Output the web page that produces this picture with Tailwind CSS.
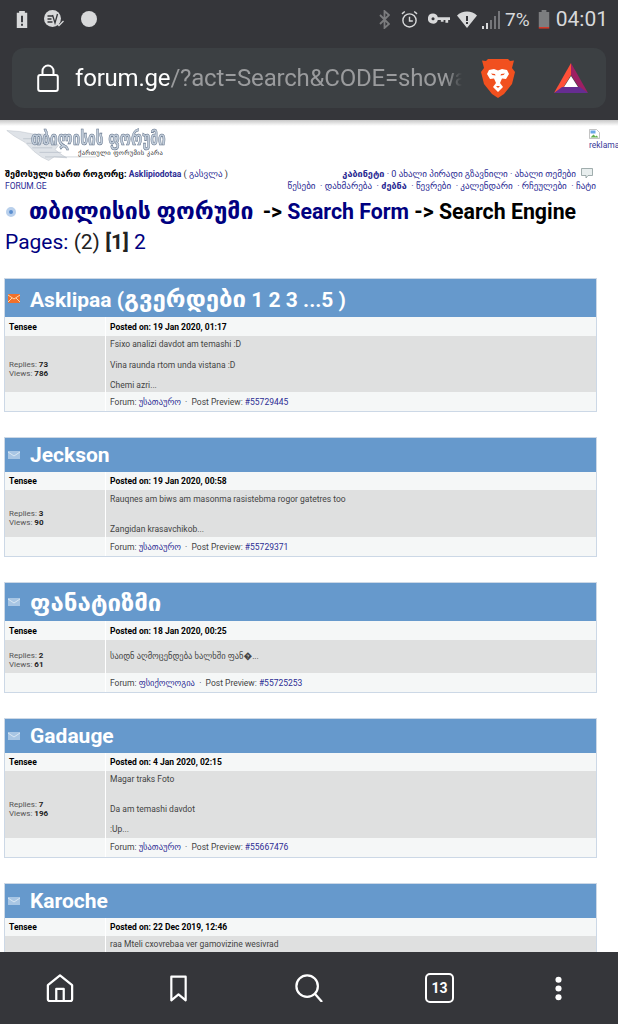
<!DOCTYPE html>
<html lang="ka">
<head>
  <meta charset="UTF-8">
  <meta name="viewport" content="width=device-width, initial-scale=1.0">
  <title>forum.ge</title>
  <script src="https://cdn.jsdelivr.net/npm/@tailwindcss/browser@4"></script>
</head>
<body class="relative w-[618px] h-[1024px] overflow-hidden bg-white font-['Roboto','DejaVu_Sans',sans-serif]">

  <!-- status bar -->
  <div class="h-[38px] bg-[#35363a] flex items-center pl-[16px] pr-[10px] text-[#d8d9da]">
    <svg class="w-[12px] h-[19px] mr-[15px]" viewBox="0 0 12 20"><path fill="#d8d9da" d="M3 1h6v2h2.500v16H.5V3H3z"/><path fill="#35363a" d="M5 6h2v7H5zM5 14.500h2v2H5z"/></svg>
    <svg class="w-[23px] h-[20px] mr-[15px]" viewBox="0 0 22 20"><circle cx="9" cy="9.500" r="8.500" fill="#d8d9da"/><path fill="none" stroke="#35363a" stroke-width="1.300" d="M4 7h5M4 10h4M4 13h5M9 6l2.500 8L14 5"/><path fill="none" stroke="#d8d9da" stroke-width="1.300" d="M13 14l2.500 2.500L20 12"/></svg>
    <div class="w-[16px] h-[16px] rounded-full bg-[#d8d9da]"></div>
    <div class="flex-1"></div>
    <svg class="w-[11px] h-[19px] mr-[11px]" viewBox="0 0 11 19"><path fill="none" stroke="#7b7c7e" stroke-width="1.800" d="M1 5l9 9-4.500 4V1L10 5l-9 9"/></svg>
    <svg class="w-[17px] h-[19px] mr-[10px]" viewBox="0 0 18 20"><circle cx="9" cy="11" r="7" fill="none" stroke="#d8d9da" stroke-width="1.500"/><path fill="none" stroke="#d8d9da" stroke-width="1.500" d="M9 7v4.500h3.500M1 4l3-2.500M17 4l-3-2.500"/></svg>
    <svg class="w-[22px] h-[12px] mr-[7px]" viewBox="0 0 24 12"><path fill="#d8d9da" fill-rule="evenodd" d="M5.500 0a5.500 5.500 0 0 1 5.200 4H24v3h-2v3h-3V7h-2v2h-3V7h-3.300A5.500 5.500 0 1 1 5.500 0zm0 4a1.700 1.700 0 1 0 0 3.400 1.700 1.700 0 0 0 0-3.400z"/></svg>
    <svg class="w-[20px] h-[17px] mr-[5px]" viewBox="0 0 20 17"><path fill="#d8d9da" d="M0 4.500C5-1 15-1 20 4.500L10 17z"/><path fill="#35363a" d="M9 5h2v5H9zM9 11h2v2H9z"/></svg>
    <svg class="w-[18px] h-[19px] mr-[5px]" viewBox="0 0 18 19"><path fill="#d8d9da" d="M0 16h2v3H0zM4 13h2v6H4z"/><path fill="#75767a" d="M8 10h2v9H8zM12 6h2v13h-2zM16 1h2v18h-2z"/></svg>
    <span class="text-[19px] leading-none mr-[8px]">7%</span>
    <svg class="w-[12px] h-[19px] mr-[6px]" viewBox="0 0 11 20"><path fill="#7c7d7f" d="M3 0h5v2h3v16H0V2h3z"/><path fill="#e53a28" d="M0 18h11v1.500H0z"/></svg>
    <span class="text-[21px] leading-none">04:01</span>
  </div>

  <!-- toolbar -->
  <div class="h-[82px] bg-[#35363a] px-3 pt-[10px] relative">
    <div class="h-[60px] bg-[#3c4043] rounded-xl flex items-center">
      <svg class="w-[22px] h-[28px] ml-[25px] mr-[16px]" viewBox="0 0 22 28"><rect x="1.200" y="11" width="19.600" height="16" rx="2" fill="none" stroke="#fff" stroke-width="2"/><path fill="none" stroke="#fff" stroke-width="2" d="M5.500 11V7a5.500 5.500 0 0 1 11 0v4"/></svg>
      <div class="w-[387px] overflow-hidden whitespace-nowrap text-[24px] tracking-[-0.2px] text-[#9a9b9d] [mask-image:linear-gradient(to_right,black_96%,transparent)]"><span class="text-white">forum.ge</span>/?act=Search&amp;CODE=showall</div>
      <svg class="w-[34px] h-[40px] ml-[19px]" viewBox="0 0 34 40"><path fill="#f1501f" d="M7 1h20l2 2 4-.5L31 10l3 4-3 12-8 10-6 4-6-4-8-10-3-12 3-4-2-7.500L5 3z"/><path fill="#fff" d="M8 12l5-1 4 1.500L21 11l5 1 2 4-3 5-4-.5-2 4.500 3 4-5 5-5-5 3-4-2-4.500-4 .5-3-5z"/><path fill="#f1501f" d="M10 15.500l4 .5.500 1.500-3-.5zM24 15.500l-4 .5-.5 1.500 3-.5zM15 28h4l-2 2z"/></svg>
      <svg class="w-[34px] h-[30px] ml-[39px]" viewBox="0 0 34 30"><path fill="#ff5038" d="M17 0L0 30l9-5 8-13z"/><path fill="#9e1f63" d="M17 0l17 30-8-4-9-14z"/><path fill="#662d91" d="M0 30h34l-8-6H8z"/><path fill="#fff" d="M17 13l7 11H10z"/></svg>
    </div>
  </div>
  <div class="h-[6px] -mb-[6px] relative bg-gradient-to-b from-[#c8c8c8] to-white"></div>

  <!-- page header -->
  <div class="flex justify-between pl-[5px] h-[46px]">
    <div class="relative w-[170px] h-[46px]">
      <svg class="absolute left-0 top-[6px] w-[100px] h-[40px]" viewBox="0 0 110 40"><path fill="#dfe3e8" stroke="#b5bcc6" stroke-width=".5" d="M2 3l14 1 16 3 12 0 10 8 5 4-4 5 8 6 5 3-14-1-6 4-8-4-8-6-10-10-12-7z"/><path fill="none" stroke="#a9b1bd" stroke-width=".6" d="M20 12h30M24 17h28M30 22h22M38 27h24M44 32h56"/></svg>
      <div class="absolute left-[26px] top-[6px] text-[19px] leading-[24px] font-bold whitespace-nowrap text-[#c3cedb] [-webkit-text-stroke:0.6px_#5d6e85] font-['DejaVu_Sans',sans-serif] scale-x-[.72] origin-left">თბილისის ფორუმი</div>
      <div class="absolute left-[73px] top-[29px] text-[6.500px] whitespace-nowrap tracking-[.3px] text-[#333] font-['DejaVu_Sans',sans-serif]">ქართული ფორუმის კარა</div>
    </div>
    <div class="w-[29px] pt-[9px] text-[8.500px] leading-[10px] text-[#3a3a9a] overflow-hidden">
      <svg class="w-[11px] h-[10px] mb-[1px]" viewBox="0 0 11 10"><path fill="#fff" stroke="#aaa" stroke-width=".7" d="M.5.500h7l3 3v6H.5z"/><path fill="#6aa7e8" d="M1.500 1.500h5v3h-5z"/><path fill="#63b04f" d="M1.500 8.500l3-3 2 2 1-1 2 2z"/></svg>
      <div>reklama</div>
    </div>
  </div>

  <!-- user links -->
  <div class="flex justify-between pl-[5px] pr-[42px] h-[11px] text-[9.100px] leading-[11px] text-[#333] mt-[3px]">
    <div class="whitespace-nowrap"><b class="text-black">შემოსული ხართ როგორც:</b> <b class="text-[#2c2c94] text-[8.500px]">Asklipiodotaa</b> ( <span class="text-[#2c2c94]">გასვლა</span> )</div>
    <div class="whitespace-nowrap text-[#2c2c94]"><b>კაბინეტი</b> · 0 ახალი პირადი გზავნილი · ახალი თემები</div>
  </div>
  <svg class="absolute left-[581px] top-[168px] w-[12px] h-[11px]" viewBox="0 0 12 11"><path fill="#e8eeee" stroke="#8a9a9a" stroke-width=".8" d="M.5.500h11v7H7L5 10V7.500H.5z"/></svg>
  <div class="flex justify-between pl-[5px] pr-[22px] h-[13px] text-[9.100px] leading-[13px] text-[#2c2c94]">
    <div class="text-[8.500px]">FORUM.GE</div>
    <div class="whitespace-nowrap">წესები &nbsp;· დახმარება &nbsp;· <b>ძებნა</b> &nbsp;· წევრები &nbsp;· კალენდარი &nbsp;· რჩეულები &nbsp;· ჩატი</div>
  </div>

  <!-- title -->
  <div class="flex items-center pl-[6px] h-[30px] mt-[4px] text-[21.300px] font-bold text-black whitespace-nowrap">
    <span class="w-[10px] h-[10px] rounded-full bg-[#5b8fd0] border-[3px] border-[#b9d0ec] mr-[13px]"></span>
    <span class="text-[#000080] text-[23px] mr-[4px]">თბილისის ფორუმი</span>&nbsp;-&gt;&nbsp;<span class="text-[#000080]">Search Form</span>&nbsp;-&gt; Search Engine
  </div>
  <div class="pl-[5px] h-[30px] text-[21px] leading-[30px] text-[#222]"><span class="text-[#000080]">Pages:</span> (2) <b>[1]</b> <span class="text-[#000080]">2</span></div>

  <!-- results -->
  <div class="pl-1 w-[597px] mt-[21px] flex flex-col gap-[25px]">

    <div class="border border-[#ccd8e6]">
      <div class="h-[38px] bg-[#6699cc] flex items-center pl-[3px] text-white text-[21px] font-bold">
        <svg class="w-[12px] h-[9px] mr-[10px]" viewBox="0 0 12 9"><rect width="12" height="9" rx="1" fill="#f2702a"/><path fill="none" stroke="#fdd9a8" d="M0 1l6 4 6-4M0 8l4-4M12 8L8 4"/></svg>
        <span class="pt-[2px]">Asklipaa (<span class="text-[24px]">გვერდები</span> 1 2 3 ...5 )</span>
      </div>
      <div class="grid grid-cols-[100px_1fr] gap-x-px text-[8.500px] bg-white">
        <div class="h-[19px] leading-[20px] pl-[4px] bg-[#f5f7f7] font-bold text-black">Tensee</div>
        <div class="h-[19px] leading-[20px] pl-[4px] bg-[#f5f7f7] font-bold text-black">Posted on: 19 Jan 2020, 01:17</div>
        <div class="h-[56px] bg-[#dfe0e0] pl-[4px] pt-[9px] flex flex-col justify-center leading-[9px] text-[8px] text-[#555]"><div>Replies: <b class="text-[#222]">73</b></div><div>Views: <b class="text-[#222]">786</b></div></div>
        <div class="h-[56px] bg-[#dfe0e0] pl-[4px] pt-[3px] leading-[10.300px] text-[#444]">Fsixo analizi davdot am temashi :D<br><br>Vina raunda rtom unda vistana :D<br><br>Chemi azri...</div>
        <div class="h-[19px] bg-[#f5f7f7]"></div>
        <div class="h-[19px] leading-[20px] pl-[4px] bg-[#f5f7f7] text-[#444]">Forum: <span class="text-[#2c2c94]">უსათაურო</span> &nbsp;·&nbsp; Post Preview: <span class="text-[#2c2c94]">#55729445</span></div>
      </div>
    </div>

    <div class="border border-[#ccd8e6]">
      <div class="h-[34px] bg-[#6699cc] flex items-center pl-[3px] text-white text-[21px] font-bold">
        <svg class="w-[12px] h-[8px] mr-[10px]" viewBox="0 0 12 8"><rect width="12" height="8" fill="#a8c6e4"/><path fill="none" stroke="#d8e6f2" d="M0 1l6 4 6-4"/></svg>
        <span class="pt-[1px]">Jeckson</span>
      </div>
      <div class="grid grid-cols-[100px_1fr] gap-x-px text-[8.500px] bg-white">
        <div class="h-[18px] leading-[19px] pl-[4px] bg-[#f5f7f7] font-bold text-black">Tensee</div>
        <div class="h-[18px] leading-[19px] pl-[4px] bg-[#f5f7f7] font-bold text-black">Posted on: 19 Jan 2020, 00:58</div>
        <div class="h-[47px] bg-[#dfe0e0] pl-[4px] pt-[9px] flex flex-col justify-center leading-[9px] text-[8px] text-[#555]"><div>Replies: <b class="text-[#222]">3</b></div><div>Views: <b class="text-[#222]">90</b></div></div>
        <div class="h-[47px] bg-[#dfe0e0] pl-[4px] pt-[4px] leading-[10px] text-[#444]">Rauqnes am biws am masonma rasistebma rogor gatetres too<br><br><br>Zangidan krasavchikob...</div>
        <div class="h-[19px] bg-[#f5f7f7]"></div>
        <div class="h-[19px] leading-[21px] pl-[4px] bg-[#f5f7f7] text-[#444]">Forum: <span class="text-[#2c2c94]">უსათაურო</span> &nbsp;·&nbsp; Post Preview: <span class="text-[#2c2c94]">#55729371</span></div>
      </div>
    </div>

    <div class="border border-[#ccd8e6]">
      <div class="h-[38px] bg-[#6699cc] flex items-center pl-[3px] text-white text-[24px] font-bold">
        <svg class="w-[12px] h-[8px] mr-[10px]" viewBox="0 0 12 8"><rect width="12" height="8" fill="#a8c6e4"/><path fill="none" stroke="#d8e6f2" d="M0 1l6 4 6-4"/></svg>
        <span class="pt-[2px]">ფანატიზმი</span>
      </div>
      <div class="grid grid-cols-[100px_1fr] gap-x-px text-[8.500px] bg-white">
        <div class="h-[19px] leading-[20px] pl-[4px] bg-[#f5f7f7] font-bold text-black">Tensee</div>
        <div class="h-[19px] leading-[20px] pl-[4px] bg-[#f5f7f7] font-bold text-black">Posted on: 18 Jan 2020, 00:25</div>
        <div class="h-[33px] bg-[#dfe0e0] pl-[4px] pt-[7px] flex flex-col justify-center leading-[9px] text-[8px] text-[#555]"><div>Replies: <b class="text-[#222]">2</b></div><div>Views: <b class="text-[#222]">61</b></div></div>
        <div class="h-[33px] bg-[#dfe0e0] pl-[4px] flex items-center text-[#444]">საიდნ აღმოცენდება ხალხში ფან�...</div>
        <div class="h-[19px] bg-[#f5f7f7]"></div>
        <div class="h-[19px] leading-[20px] pl-[4px] bg-[#f5f7f7] text-[#444]">Forum: <span class="text-[#2c2c94]">ფსიქოლოგია</span> &nbsp;·&nbsp; Post Preview: <span class="text-[#2c2c94]">#55725253</span></div>
      </div>
    </div>

    <div class="border border-[#ccd8e6]">
      <div class="h-[34px] bg-[#6699cc] flex items-center pl-[3px] text-white text-[21px] font-bold">
        <svg class="w-[12px] h-[8px] mr-[10px]" viewBox="0 0 12 8"><rect width="12" height="8" fill="#a8c6e4"/><path fill="none" stroke="#d8e6f2" d="M0 1l6 4 6-4"/></svg>
        <span class="pt-[1px]">Gadauge</span>
      </div>
      <div class="grid grid-cols-[100px_1fr] gap-x-px text-[8.500px] bg-white">
        <div class="h-[18px] leading-[18px] pl-[4px] bg-[#f5f7f7] font-bold text-black">Tensee</div>
        <div class="h-[18px] leading-[18px] pl-[4px] bg-[#f5f7f7] font-bold text-black">Posted on: 4 Jan 2020, 02:15</div>
        <div class="h-[67px] bg-[#dfe0e0] pl-[4px] pt-[8px] flex flex-col justify-center leading-[9px] text-[8px] text-[#555]"><div>Replies: <b class="text-[#222]">7</b></div><div>Views: <b class="text-[#222]">196</b></div></div>
        <div class="h-[67px] bg-[#dfe0e0] pl-[4px] pt-[3px] leading-[10px] text-[#444]">Magar traks Foto<br><br><br>Da am temashi davdot<br><br>:Up...</div>
        <div class="h-[19px] bg-[#f5f7f7]"></div>
        <div class="h-[19px] leading-[19px] pl-[4px] bg-[#f5f7f7] text-[#444]">Forum: <span class="text-[#2c2c94]">უსათაურო</span> &nbsp;·&nbsp; Post Preview: <span class="text-[#2c2c94]">#55667476</span></div>
      </div>
    </div>

    <div class="border border-[#ccd8e6]">
      <div class="h-[34px] bg-[#6699cc] flex items-center pl-[3px] text-white text-[21px] font-bold">
        <svg class="w-[12px] h-[8px] mr-[10px]" viewBox="0 0 12 8"><rect width="12" height="8" fill="#a8c6e4"/><path fill="none" stroke="#d8e6f2" d="M0 1l6 4 6-4"/></svg>
        <span class="pt-[1px]">Karoche</span>
      </div>
      <div class="grid grid-cols-[100px_1fr] gap-x-px text-[8.500px] bg-white">
        <div class="h-[18px] leading-[18px] pl-[4px] bg-[#f5f7f7] font-bold text-black">Tensee</div>
        <div class="h-[18px] leading-[18px] pl-[4px] bg-[#f5f7f7] font-bold text-black">Posted on: 22 Dec 2019, 12:46</div>
        <div class="h-[47px] bg-[#dfe0e0]"></div>
        <div class="h-[47px] bg-[#dfe0e0] pl-[4px] pt-[3px] leading-[10px] text-[#444]">raa Mteli cxovrebaa ver gamovizine wesivrad</div>
      </div>
    </div>
  </div>

  <!-- bottom bar -->
  <div class="absolute left-0 bottom-0 w-full h-[72px] bg-[#35363a] flex items-center pl-[46px]">
    <svg class="w-[28px] h-[28px]" viewBox="0 0 30 30"><path fill="none" stroke="#fff" stroke-width="2.400" stroke-linejoin="round" d="M2 12L15 1.500 28 12v15a2 2 0 0 1-2 2H4a2 2 0 0 1-2-2zM11 29V16h8v13"/></svg>
    <svg class="w-[19px] h-[27px] ml-[95px]" viewBox="0 0 20 32"><path fill="none" stroke="#fff" stroke-width="2.600" stroke-linejoin="round" d="M1.500 2h17v28L10 23l-8.500 7z"/></svg>
    <svg class="w-[28px] h-[28px] ml-[107px]" viewBox="0 0 30 30"><circle cx="13" cy="13" r="11.500" fill="none" stroke="#fff" stroke-width="2.400"/><path stroke="#fff" stroke-width="2.400" d="M21 21l8 9"/></svg>
    <div class="w-[29px] h-[30px] ml-[102px] border-[2px] border-white rounded-[5px] flex items-center justify-center text-white text-[14px] font-bold">13</div>
    <svg class="w-[7px] h-[25px] ml-[101px]" viewBox="0 0 8 28"><circle cx="4" cy="4" r="3.500" fill="#fff"/><circle cx="4" cy="14" r="3.500" fill="#fff"/><circle cx="4" cy="24" r="3.500" fill="#fff"/></svg>
  </div>
</body>
</html>
